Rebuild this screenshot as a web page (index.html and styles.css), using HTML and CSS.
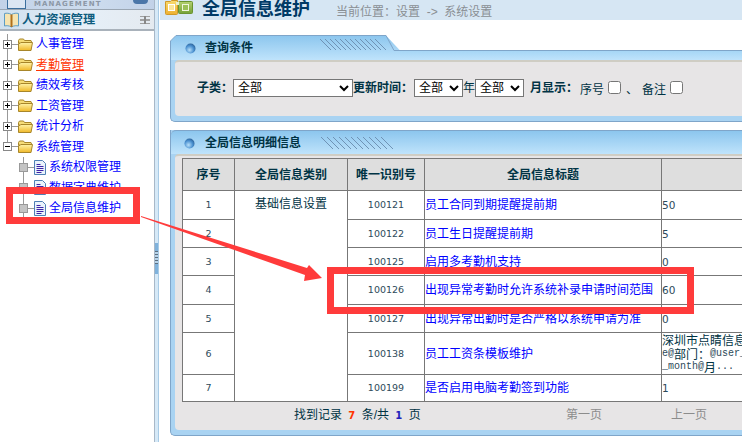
FILE: index.html
```html
<!DOCTYPE html>
<html lang="zh">
<head>
<meta charset="utf-8">
<title>全局信息维护</title>
<link rel="stylesheet" href="styles.css">
</head>
<body>
<svg class="defs" width="0" height="0" aria-hidden="true">
  <defs>
    <linearGradient id="gFolder" x1="0" y1="0" x2="0" y2="1"><stop offset="0" stop-color="#fff3a8"/><stop offset="1" stop-color="#f0b828"/></linearGradient>
    <linearGradient id="gTab" x1="0" y1="0" x2="0" y2="1"><stop offset="0" stop-color="#8cc6ee"/><stop offset="1" stop-color="#bfe3fb"/></linearGradient>
    <linearGradient id="gYellow" x1="0" y1="0" x2="0" y2="1"><stop offset="0" stop-color="#f8dc70"/><stop offset="1" stop-color="#eeb030"/></linearGradient>
    <linearGradient id="gGreen" x1="0" y1="0" x2="0" y2="1"><stop offset="0" stop-color="#b4d070"/><stop offset="1" stop-color="#74a238"/></linearGradient>
    <radialGradient id="gBall" cx="0.4" cy="0.65" r="0.7"><stop offset="0" stop-color="#b8e0fa"/><stop offset="0.6" stop-color="#4a90d0"/><stop offset="1" stop-color="#2a5f95"/></radialGradient>
    <symbol id="folder" viewBox="0 0 15 13">
      <path d="M.5 2.500 1.500 1h4l1 1.500h6.500l.5 1.500v1H.5z" fill="#f6dc78" stroke="#a8862a"/>
      <path d="M.5 12.500V5.500h1.500L3 4.500h11.500l-1.500 8z" fill="url(#gFolder)" stroke="#a8862a"/>
    </symbol>
    <symbol id="plus" viewBox="0 0 18 21">
      <path d="M7.500 0v6M7.500 15v6M12 10.500h6" stroke="#999" fill="none"/>
      <rect x="3.500" y="6.500" width="8" height="8" fill="#fff" stroke="#888"/>
      <path d="M5 10.500h5M7.500 8v5" stroke="#000"/>
    </symbol>
    <symbol id="minus" viewBox="0 0 18 21">
      <path d="M7.500 0v6M12 10.500h6" stroke="#999" fill="none"/>
      <rect x="3.500" y="6.500" width="8" height="8" fill="#fff" stroke="#888"/>
      <path d="M5 10.500h5" stroke="#000"/>
    </symbol>
    <symbol id="leaf" viewBox="0 0 47 21">
      <path d="M23.500 0v21" stroke="#999" fill="none"/>
      <rect x="19.500" y="6.500" width="8" height="8" fill="#c4c4c4" stroke="#999"/>
      <path d="M28 10.500h6" stroke="#999" fill="none"/>
      <path d="M34.500 3.500h8l3 3v11h-11z" fill="#eaf3fb" stroke="#4f7fb5"/>
      <path d="M36.500 7.500h4M36.500 9.500h7M36.500 11.500h7M36.500 13.500h7M36.500 15.500h5" stroke="#3d23a8"/>
    </symbol>
  </defs>
</svg>

<div class="app">
  <aside class="side">
    <div class="brand">
      <span class="brand-box"></span>
      <span class="brand-text">MANAGEMENT</span>
      <span class="brand-dot"></span>
    </div>
    <div class="side-head">
      <svg class="book" width="17" height="16" viewBox="0 0 17 16">
        <path d="M8.500 2.500C6 1 3.500 1 1.500 1.500v12.500c2-.5 4.500-.5 7 1 2.500-1.500 5-1.500 7-1V1.500c-2-.5-4.500-.5-7 1z" fill="#f6e4b0" stroke="#5c9cc4"/>
        <path d="M8.500 2.500V15" stroke="#b0701c" stroke-width="2"/>
      </svg>
      <span class="side-title">人力资源管理</span>
      <svg class="sliders" width="10" height="8" viewBox="0 0 10 8"><path d="M0 .5h10M0 7.500h10M3 4h4" stroke="#a0a0a0"/><path d="M0 3.500h10M0 4.500h10" stroke="#a0a0a0"/><path d="M4 0h2v8H4z" fill="#888"/></svg>
    </div>
    <ul class="tree">
      <li class="node"><svg class="twig" width="18" height="21"><use href="#plus"/></svg><svg class="folder" width="15" height="13"><use href="#folder"/></svg><a class="link" href="#">人事管理</a></li>
      <li class="node"><svg class="twig" width="18" height="21"><use href="#plus"/></svg><svg class="folder" width="15" height="13"><use href="#folder"/></svg><a class="link active" href="#">考勤管理</a></li>
      <li class="node"><svg class="twig" width="18" height="21"><use href="#plus"/></svg><svg class="folder" width="15" height="13"><use href="#folder"/></svg><a class="link" href="#">绩效考核</a></li>
      <li class="node"><svg class="twig" width="18" height="21"><use href="#plus"/></svg><svg class="folder" width="15" height="13"><use href="#folder"/></svg><a class="link" href="#">工资管理</a></li>
      <li class="node"><svg class="twig" width="18" height="21"><use href="#plus"/></svg><svg class="folder" width="15" height="13"><use href="#folder"/></svg><a class="link" href="#">统计分析</a></li>
      <li class="node"><svg class="twig" width="18" height="21"><use href="#minus"/></svg><svg class="folder" width="15" height="13"><use href="#folder"/></svg><a class="link" href="#">系统管理</a></li>
      <li class="node"><svg class="twig-leaf" width="47" height="21"><use href="#leaf"/></svg><a class="link" href="#">系统权限管理</a></li>
      <li class="node"><svg class="twig-leaf" width="47" height="21"><use href="#leaf"/></svg><a class="link" href="#">数据字典维护</a></li>
      <li class="node"><svg class="twig-leaf" width="47" height="21"><use href="#leaf"/></svg><a class="link" href="#">全局信息维护</a></li>
    </ul>
  </aside>
  <div class="split"><span class="grip"></span></div>

  <main class="main">
    <header class="top">
      <svg class="top-icon" width="28" height="16" viewBox="0 0 28 16">
        <rect x="13.500" y="1.500" width="14" height="12" rx="1" fill="url(#gGreen)" stroke="#6a9430"/>
        <path d="M.5 1.500h5l1-1h6v13a1 1 0 0 1-1 1H1.500a1 1 0 0 1-1-1z" fill="url(#gYellow)" stroke="#d09a28"/>
        <rect x="3.500" y="4.500" width="6" height="6" fill="#fbe69a" stroke="#fff"/>
        <rect x="11" y="2" width="3" height="3" fill="#e8f0d0"/>
        <rect x="17.500" y="4.500" width="6" height="6" fill="#9cc058" stroke="#eef5dc"/>
      </svg>
      <h1 class="top-title">全局信息维护</h1>
      <span class="crumb">当前位置：设置 &nbsp;-&gt;&nbsp; 系统设置</span>
    </header>

    <section class="panel panel-query">
      <div class="head head-tabbed">
        <div class="tab">
          <svg class="tab-bg" width="231" height="25" viewBox="0 0 231 25">
            <path d="M.5 25V6L6 .5h210L230 15.500V25z" fill="url(#gTab)"/>
            <path d="M.5 25V6L6 .5h210L224 15.500h7" fill="none" stroke="#7fa5c9"/>
            <path stroke="#6f93b5" d="M150 4l11 11M155 4l11 11M160 4l11 11M165 4l11 11M170 4l11 11M175 4l11 11M180 4l11 11M185 4l11 11M190 4l11 11M195 4l11 11M200 4l11 11M205 4l11 11"/>
          </svg>
          <svg class="ball" width="11" height="11"><circle cx="5.500" cy="5.500" r="5" fill="url(#gBall)"/></svg>
          <span class="panel-title">查询条件</span>
        </div>
      </div>
      <div class="body">
        <form class="filters">
          <label class="fl">子类：</label>
          <select class="sel sel-wide"><option>全部</option></select>
          <label class="fl fl-time">更新时间：</label>
          <select class="sel sel-small"><option>全部</option></select>
          <span class="fn">年</span>
          <select class="sel sel-small"><option>全部</option></select>
          <label class="fl fl-month">月显示：</label>
          <span class="fn fn-low fn-first">序号</span>
          <input class="chk" type="checkbox">
          <span class="fn fn-low fn-sep">、</span>
          <span class="fn fn-low">备注</span>
          <input class="chk" type="checkbox">
        </form>
      </div>
    </section>

    <section class="panel panel-list">
      <div class="head head-full">
        <svg class="ball" width="11" height="11"><circle cx="5.500" cy="5.500" r="5" fill="url(#gBall)"/></svg>
        <span class="panel-title">全局信息明细信息</span>
        <svg class="hatch" width="74" height="13"><path stroke="#6f93b5" d="M0 0l12 12M6 0l12 12M12 0l12 12M18 0l12 12M24 0l12 12M30 0l12 12M36 0l12 12M42 0l12 12M48 0l12 12M54 0l12 12M60 0l12 12"/></svg>
      </div>
      <div class="body body-list">
        <table class="grid">
          <colgroup><col class="c1"><col class="c2"><col class="c3"><col class="c4"><col class="c5"></colgroup>
          <thead>
            <tr><th>序号</th><th>全局信息类别</th><th>唯一识别号</th><th>全局信息标题</th><th></th></tr>
          </thead>
          <tbody>
            <tr class="r1"><td class="num">1</td><td class="cat" rowspan="7">基础信息设置</td><td class="num">100121</td><td><a class="link" href="#">员工合同到期提醒提前期</a></td><td class="val">50</td></tr>
            <tr class="r2"><td class="num">2</td><td class="num">100122</td><td><a class="link" href="#">员工生日提醒提前期</a></td><td class="val">5</td></tr>
            <tr class="r3"><td class="num">3</td><td class="num">100125</td><td><a class="link" href="#">启用多考勤机支持</a></td><td class="val">0</td></tr>
            <tr class="r4"><td class="num">4</td><td class="num">100126</td><td><a class="link" href="#">出现异常考勤时允许系统补录申请时间范围</a></td><td class="val">60</td></tr>
            <tr class="r5"><td class="num">5</td><td class="num">100127</td><td><a class="link" href="#">出现异常出勤时是否严格以系统申请为准</a></td><td class="val">0</td></tr>
            <tr class="r6"><td class="num">6</td><td class="num">100138</td><td><a class="link" href="#">员工工资条模板维护</a></td><td class="val val-long"><span class="ln"><span class="zh">深圳市点睛信息</span></span><span class="ln">e@<span class="zh">部门：</span>@user_</span><span class="ln">_month@<span class="zh">月</span>...</span></td></tr>
            <tr class="r7"><td class="num">7</td><td class="num">100199</td><td><a class="link" href="#">是否启用电脑考勤签到功能</a></td><td class="val">1</td></tr>
          </tbody>
        </table>
        <div class="pager">
          <span class="count">找到记录 <b class="red">7</b> 条/共 <b class="blue">1</b> 页</span>
          <span class="pg pg-first">第一页</span>
          <span class="pg pg-prev">上一页</span>
        </div>
      </div>
    </section>
  </main>
</div>

<svg class="marks" width="742" height="442" viewBox="0 0 742 442" aria-hidden="true">
  <rect x="9.500" y="190.500" width="127" height="30" fill="none" stroke="#ff3b3b" stroke-width="7"/>
  <rect x="330.500" y="270.500" width="360" height="40" fill="none" stroke="#ff3b3b" stroke-width="7"/>
  <path d="M141 216 307 268 309 265 322 278 304 281 305 275 141 217z" fill="#ff3b3b"/>
</svg>
</body>
</html>
```
FILE: styles.css
```css
* { box-sizing: border-box; }
html, body { margin: 0; padding: 0; height: 100%; }
body {
  position: relative;
  width: 742px;
  height: 442px;
  overflow: hidden;
  background: #fff;
  color: #003344;
  font: 12px/16px "Liberation Sans", "Noto Sans CJK SC", sans-serif;
}
.defs { position: absolute; }
.marks { position: absolute; left: 0; top: 0; }
.app { display: flex; width: 742px; height: 442px; }
.link { color: #0000ff; text-decoration: none; white-space: nowrap; }
.link.active { color: #ff3300; text-decoration: underline; }

/* sidebar */
.side { flex: 0 0 154px; display: flex; flex-direction: column; background: #fff; overflow: hidden; }
.brand {
  height: 9px;
  display: flex;
  align-items: flex-end;
  background: linear-gradient(90deg, #c2d2e8, #cddcee 60%, #c2d2e8);
  overflow: hidden;
}
.brand-box { width: 19px; height: 9px; margin-left: 7px; background: #dbe6f3; border: 1px solid #3c6f9e; border-top: 0; }
.brand-text { margin-left: 8px; width: 99px; height: 9px; color: #8c97a6; font: bold 7px/8px "DejaVu Sans", sans-serif; letter-spacing: 1.1px; }
.brand-dot { width: 15px; height: 4px; align-self: flex-start; background: #4b76a8; border-radius: 0 0 8px 8px; }
.side-head {
  height: 22px;
  display: flex;
  align-items: center;
  border-top: 1px solid #9aa6b3;
  border-bottom: 2px solid #a9b2bb;
  background: linear-gradient(90deg, #cfe0ef, #e6eff8 55%, #e4eaf0);
}
.book { margin-left: 3px; }
.side-title { margin-left: 2px; flex: 1; font-weight: bold; color: #0f5c7e; font-size: 12.2px; }
.sliders { margin-right: 4px; }
.tree { list-style: none; margin: 3px 0 0; padding: 0; }
.node { height: 20.5px; display: flex; align-items: center; white-space: nowrap; }
.twig { flex: none; }
.folder { flex: none; margin-right: 3px; }
.twig-leaf { flex: none; margin-right: 2px; }

.split { flex: 0 0 6px; position: relative; background: #fff; border-left: 1px solid #a8b8c8; }
.split::before { content: ""; display: block; width: 3px; height: 100%; background: #d6e9f7; border-right: 1px solid #a8cbe6; }
.grip {
  position: absolute;
  left: 0;
  top: 243px;
  width: 3px;
  height: 31px;
  background:
    repeating-linear-gradient(180deg, #5c6f80 0 1px, #b8d4ea 1px 3px) 0 8px / 3px 13px no-repeat,
    #7fb2dc;
}

/* main */
.main { flex: 1; min-width: 0; overflow: hidden; }
.top { height: 20px; display: flex; align-items: center; background: #d6e6f3; }
.top-icon { margin-left: 5px; margin-bottom: 4px; flex: none; }
.top-title { margin: 0 0 2px 9px; font-size: 18px; line-height: 18px; font-weight: bold; color: #003a66; }
.crumb { margin-left: 26px; padding-top: 4px; color: #8a8f94; }

.panel {
  width: 640px;
  margin-left: 10px;
  border-bottom: 1px solid #7fa5c9;
  border-radius: 0 0 0 5px;
  background: #a9d3f2;
  border-left: 1px solid #7fa5c9;
  padding-bottom: 5px;
}
.panel-query { margin-top: 15px; }
.panel-list { margin-top: 8px; }
.head { display: flex; align-items: center; }
.head-tabbed {
  height: 25px;
  margin-left: -1px;
  align-items: stretch;
  background: linear-gradient(180deg, #fff 15px, #7fa5c9 15px, #7fa5c9 16px, #a6d6f6 16px, #bfe3fb 25px);
}
.tab { position: relative; width: 231px; display: flex; align-items: center; padding-top: 1px; }
.tab-bg { position: absolute; left: 0; top: 0; }
.tab .ball { position: relative; margin-left: 15px; }
.tab .panel-title { position: relative; margin-left: 9px; }
.panel-title { font-weight: bold; color: #003344; white-space: nowrap; }
.head-full {
  height: 24px;
  padding-top: 1px;
  border-top: 1px solid #7fa5c9;
  border-radius: 5px 0 0 0;
  background: linear-gradient(180deg, #8cc6ee, #bfe3fb);
}
.head-full .ball { margin-left: 13px; }
.head-full .panel-title { margin-left: 10px; }
.hatch { margin-left: 20px; }
.body {
  margin-left: 4px;
  background: #e7e5e6;
  border-top: 2px solid #cfcdc4;
  border-radius: 4px 0 0 4px;
}
.filters { height: 54px; display: flex; align-items: center; padding: 0 0 3px 22px; white-space: nowrap; }
.fl { font-weight: bold; }
.fl-time { margin-right: 1px; }
.fl-month { margin-left: 6px; }
.fn-low { padding-top: 4px; }
.fn-first { margin-left: 2px; }
.fn-sep { margin-left: 1px; width: 16px; }
.sel {
  height: 18px;
  margin: 0;
  padding: 0;
  background: #fff;
  border: 1px solid #767676;
  border-radius: 0;
  color: #000;
  font: 12px/16px "Liberation Sans", "Noto Sans CJK SC", sans-serif;
}
.sel-wide { width: 120px; }
.sel-small { width: 49px; }
.chk { width: 13px; height: 13px; margin: 0 4px 0 4px; }

.body-list { padding: 2px 0 0 7px; height: 276px; }
.grid { table-layout: fixed; width: 600px; border-collapse: collapse; background: #fff; }
.c1 { width: 52px; }
.c2 { width: 113px; }
.c3 { width: 77px; }
.c4 { width: 237px; }
.c5 { width: 121px; }
.grid th, .grid td { border: 1px solid #777; padding: 0; }
.grid th { height: 32px; background: #dedede; text-align: center; font-weight: bold; color: #003344; }
.grid td { vertical-align: middle; white-space: nowrap; overflow: hidden; }
.r1 td { height: 29px; }
.r2 td { height: 28px; }
.r3 td { height: 28px; }
.r4 td { height: 29px; }
.r5 td { height: 28px; }
.r6 td { height: 42px; }
.r7 td { height: 27px; }
.grid .num { text-align: center; font: 9.5px/14px "DejaVu Sans", sans-serif; color: #2d4a5a; }
.grid .cat { vertical-align: top; padding-top: 5px; text-align: center; color: #003344; }
.grid .val { font: 10.500px/14px "DejaVu Sans", sans-serif; color: #2d4a5a; }
.grid .val-long { font: 10px/14px "Liberation Mono", "Noto Sans CJK SC", monospace; }
.ln { display: block; height: 13.600px; }
.zh { font: 12px/13px "Noto Sans CJK SC", sans-serif; color: #003344; vertical-align: top; }
.pager { height: 26px; display: flex; align-items: center; padding-left: 112px; white-space: nowrap; }
.count { width: 272px; }
.red { color: #ff3300; font: bold 10px "DejaVu Sans", sans-serif; margin: 0 3px; }
.blue { color: #2222bb; font: bold 10px "DejaVu Sans", sans-serif; margin: 0 3px; }
.pg { color: #8c8c8c; }
.pg-first { width: 105px; }
```
